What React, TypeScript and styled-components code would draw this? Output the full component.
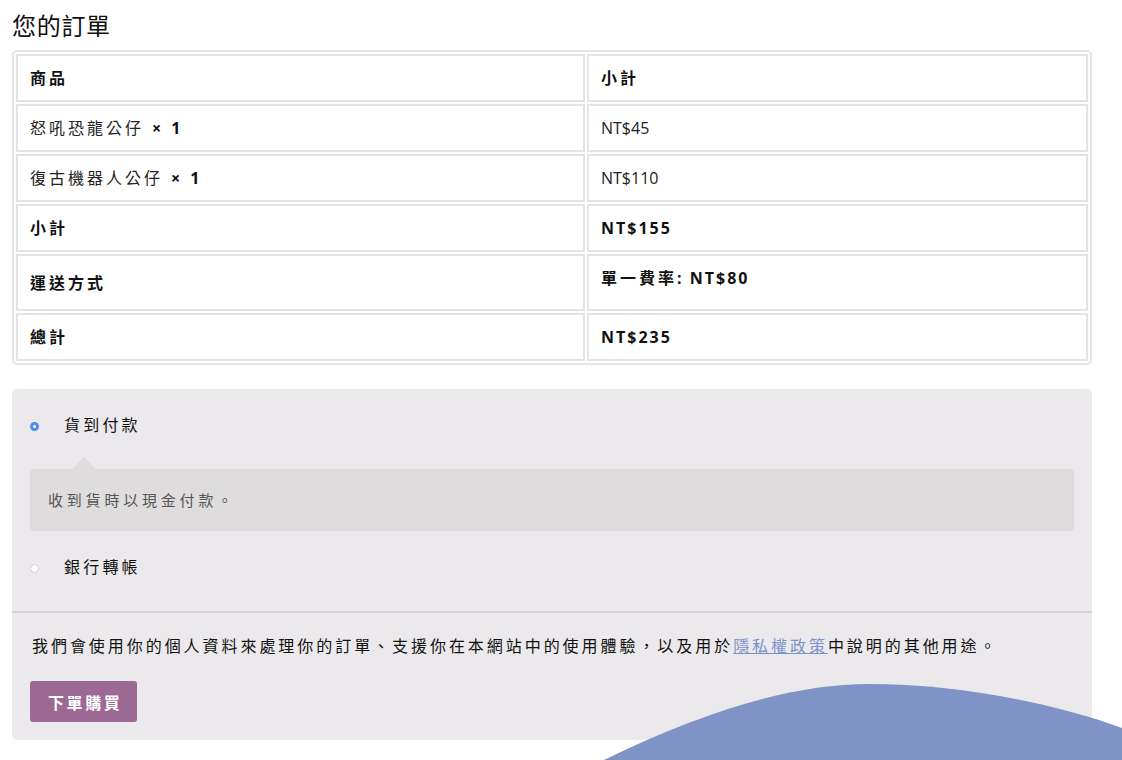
import styled, { createGlobalStyle } from 'styled-components';

const GlobalStyle = createGlobalStyle`
  * {
    box-sizing: border-box;
  }
  body {
    margin: 0;
    background: #ffffff;
    font-family: 'Open Sans', 'Noto Sans CJK TC', sans-serif;
    color: #1a1a1a;
    overflow: hidden;
  }
`;

type Line = { name: string; qty: number; price: string };

const lines: Line[] = [
  { name: '怒吼恐龍公仔', qty: 1, price: 'NT$45' },
  { name: '復古機器人公仔', qty: 1, price: 'NT$110' },
];

function App() {
  return (
    <>
      <GlobalStyle />
      <Page>
        <Heading>您的訂單</Heading>
        <OrderTable>
          <thead>
            <tr>
              <HeadCell>商品</HeadCell>
              <HeadCell>小計</HeadCell>
            </tr>
          </thead>
          <tbody>
            {lines.map((line) => (
              <tr key={line.name}>
                <Cell>
                  {line.name}
                  <Qty>× {line.qty}</Qty>
                </Cell>
                <Cell>
                  <Amount>{line.price}</Amount>
                </Cell>
              </tr>
            ))}
          </tbody>
          <tfoot>
            <tr>
              <HeadCell>小計</HeadCell>
              <HeadCell>
                <Amount $bold>NT$155</Amount>
              </HeadCell>
            </tr>
            <tr>
              <HeadCell>運送方式</HeadCell>
              <HeadCell>
                <Shipping>
                  單一費率<Amount $bold>: NT$80</Amount>
                </Shipping>
              </HeadCell>
            </tr>
            <tr>
              <HeadCell>總計</HeadCell>
              <HeadCell>
                <Amount $bold>NT$235</Amount>
              </HeadCell>
            </tr>
          </tfoot>
        </OrderTable>

        <PaymentBox>
          <Methods>
            <Method>
              <Radio $checked />
              <MethodLabel>貨到付款</MethodLabel>
            </Method>
            <MethodInfo>收到貨時以現金付款。</MethodInfo>
            <Method $spaced>
              <Radio />
              <MethodLabel>銀行轉帳</MethodLabel>
            </Method>
          </Methods>
          <PlaceOrder>
            <Privacy>
              我們會使用你的個人資料來處理你的訂單、支援你在本網站中的使用體驗，以及用於
              <PrivacyLink href="#">隱私權政策</PrivacyLink>
              中說明的其他用途。
            </Privacy>
            <OrderButton type="button">下單購買</OrderButton>
          </PlaceOrder>
        </PaymentBox>
      </Page>
      <Wave viewBox="0 0 1122 760" preserveAspectRatio="none">
        <path
          d="M 604 760 C 705 711, 792 684, 869 684 C 955 684, 1050 702, 1122 728 L 1122 760 Z"
          fill="#7f93c6"
        />
      </Wave>
    </>
  );
}

const Page = styled.main`
  width: 1104px;
  padding: 0 12px;
`;

const Heading = styled.h3`
  margin: 10px 0 9px;
  font-size: 24px;
  font-weight: 400;
  line-height: 31px;
  letter-spacing: 0.7px;
  color: #111;
`;

const OrderTable = styled.table`
  width: 1080px;
  table-layout: fixed;
  border: 2px solid #e4e4e4;
  border-radius: 5px;
  border-spacing: 2px;
  font-size: 16px;
  line-height: 24px;

  th:first-child,
  td:first-child {
    width: 569px;
  }
`;

const Cell = styled.td`
  border: 2px solid #e4e4e4;
  padding: 10px 12px;
  text-align: left;
  vertical-align: middle;
  font-weight: 400;
  letter-spacing: 3px;
  color: #222;
`;

const HeadCell = styled(Cell).attrs({ as: 'th' })`
  font-weight: 700;
  color: #111;
`;

const Amount = styled.span<{ $bold?: boolean }>`
  letter-spacing: ${({ $bold }) => ($bold ? '2px' : '0')};
`;

const Qty = styled.strong`
  margin-left: 8px;
  font-weight: 700;
  color: #111;
`;

const Shipping = styled.div`
  margin-bottom: 9px;
`;

const PaymentBox = styled.section`
  margin-top: 24px;
  width: 1080px;
  background: #ebe9eb;
  border-radius: 5px;
`;

const Methods = styled.ul`
  list-style: none;
  margin: 0;
  padding: 20px 18px 28px;
  border-bottom: 2px solid #d6d3d6;
`;

const Method = styled.li<{ $spaced?: boolean }>`
  display: flex;
  align-items: center;
  height: 32px;
  margin-top: ${({ $spaced }) => ($spaced ? '20px' : '0')};
`;

const Radio = styled.span<{ $checked?: boolean }>`
  width: 9px;
  height: 9px;
  margin-top: 3px;
  border-radius: 50%;
  background: #fff;
  border: ${({ $checked }) =>
    $checked ? '3px solid #4a8ef0' : '1px solid #cfcfcf'};
  flex-shrink: 0;
`;

const MethodLabel = styled.label`
  margin-left: 25px;
  font-size: 16px;
  line-height: 32px;
  letter-spacing: 3.2px;
  color: #111;
`;

const MethodInfo = styled.li`
  position: relative;
  margin-top: 28px;
  padding: 19px 18px;
  background: #dfdcde;
  border-radius: 2px;
  font-size: 15px;
  line-height: 24px;
  letter-spacing: 3.8px;
  color: #555;

  &::before {
    content: '';
    position: absolute;
    top: -12px;
    left: 42px;
    border-left: 12px solid transparent;
    border-right: 12px solid transparent;
    border-bottom: 12px solid #dfdcde;
  }
`;

const PlaceOrder = styled.div`
  padding: 21px 18px 18px 20px;
`;

const Privacy = styled.p`
  margin: 0;
  font-size: 16px;
  line-height: 24px;
  letter-spacing: 2.95px;
  color: #111;
`;

const PrivacyLink = styled.a`
  color: #7b93c9;
  text-decoration: underline;
`;

const OrderButton = styled.button`
  display: block;
  margin-top: 23px;
  margin-left: -2px;
  height: 41px;
  padding: 0 15px 0 18px;
  border: none;
  border-radius: 3px;
  background: #9c6894;
  color: #fff;
  font-family: inherit;
  font-size: 16px;
  font-weight: 700;
  letter-spacing: 2.6px;
`;

const Wave = styled.svg`
  position: absolute;
  left: 0;
  top: 0;
  width: 1122px;
  height: 760px;
  pointer-events: none;
`;

export default App;
